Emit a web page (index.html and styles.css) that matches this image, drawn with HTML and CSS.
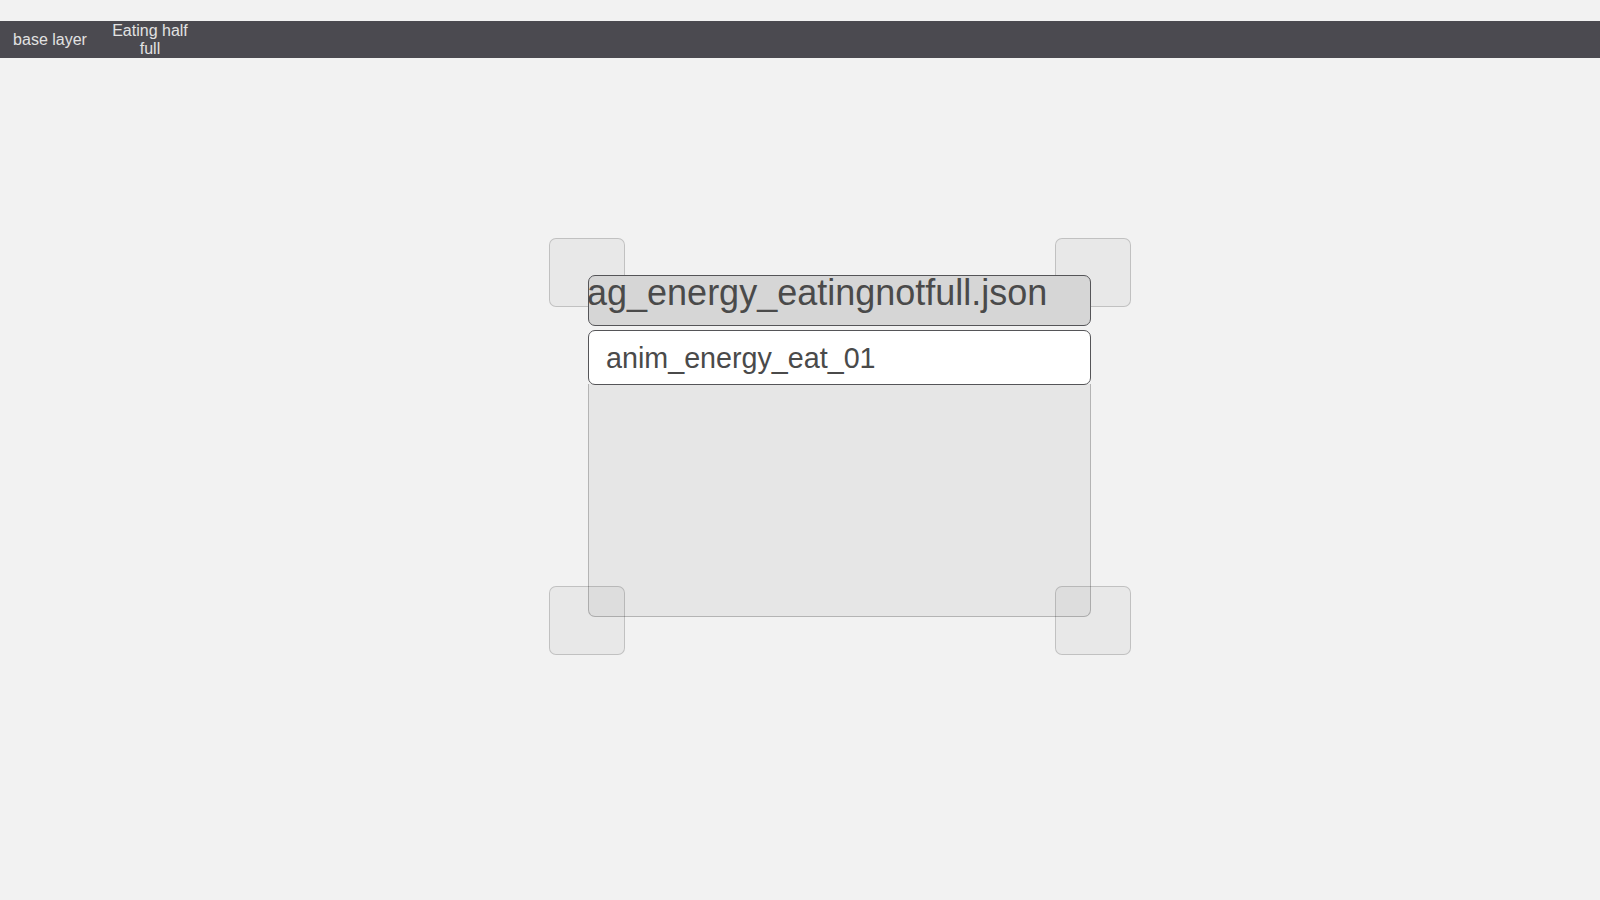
FILE: index.html
```html
<!DOCTYPE html>
<html>
<head>
<meta charset="utf-8">
<link rel="stylesheet" href="styles.css">
</head>
<body>
<div class="top-spacer"></div>
<nav class="toolbar">
  <div class="tab">base layer</div>
  <div class="tab">Eating half full</div>
</nav>
<main class="canvas">
  <div class="node">
    <div class="handle handle-tl"></div>
    <div class="handle handle-tr"></div>
    <div class="handle handle-bl"></div>
    <div class="handle handle-br"></div>
    <div class="node-title">ag_energy_eatingnotfull.json</div>
    <div class="node-name">anim_energy_eat_01</div>
    <div class="node-body"></div>
  </div>
</main>
</body>
</html>
```
FILE: styles.css
```css
html, body {
  margin: 0;
  padding: 0;
}
body {
  background: #f2f2f2;
  font-family: "Liberation Sans", Arial, sans-serif;
  width: 1600px;
  height: 900px;
  overflow: hidden;
}
.top-spacer {
  height: 21px;
}
.toolbar {
  height: 37px;
  background: #4b4a50;
  display: flex;
  align-items: center;
}
.tab {
  width: 100px;
  box-sizing: border-box;
  padding: 0 10px;
  text-align: center;
  color: #e2e2e2;
  font-size: 16px;
  line-height: 18px;
}
.canvas {
  position: relative;
  height: 842px;
}
.node {
  position: absolute;
  left: 588px;
  top: 217px;
  width: 503px;
  display: flex;
  flex-direction: column;
}
.handle {
  position: absolute;
  width: 76px;
  height: 69px;
  box-sizing: border-box;
  border: 1px solid rgba(0, 0, 0, 0.17);
  border-radius: 7px;
  background: rgba(0, 0, 0, 0.04);
  z-index: 1;
}
.handle-tl { left: -39px; top: -37px; }
.handle-tr { left: 467px; top: -37px; }
.handle-bl { left: -39px; top: 311px; }
.handle-br { left: 467px; top: 311px; }
.node-title {
  position: relative;
  z-index: 2;
  height: 51px;
  box-sizing: border-box;
  border: 1px solid #555558;
  border-radius: 7px;
  background: #d6d6d6;
  white-space: nowrap;
  color: #4a4a4a;
  font-size: 36px;
  line-height: 34px;
  text-indent: -2px;
}
.node-name {
  position: relative;
  z-index: 2;
  margin-top: 4px;
  height: 55px;
  box-sizing: border-box;
  border: 1px solid #555558;
  border-radius: 7px;
  background: #ffffff;
  color: #4a4a4a;
  font-size: 28.7px;
  line-height: 54px;
  padding-left: 17px;
  white-space: nowrap;
}
.node-body {
  position: relative;
  z-index: 0;
  margin-top: -1px;
  height: 233px;
  box-sizing: border-box;
  border: 1px solid #b4b4b4;
  border-top: none;
  border-radius: 0 0 7px 7px;
  background: #e6e6e6;
}
```
